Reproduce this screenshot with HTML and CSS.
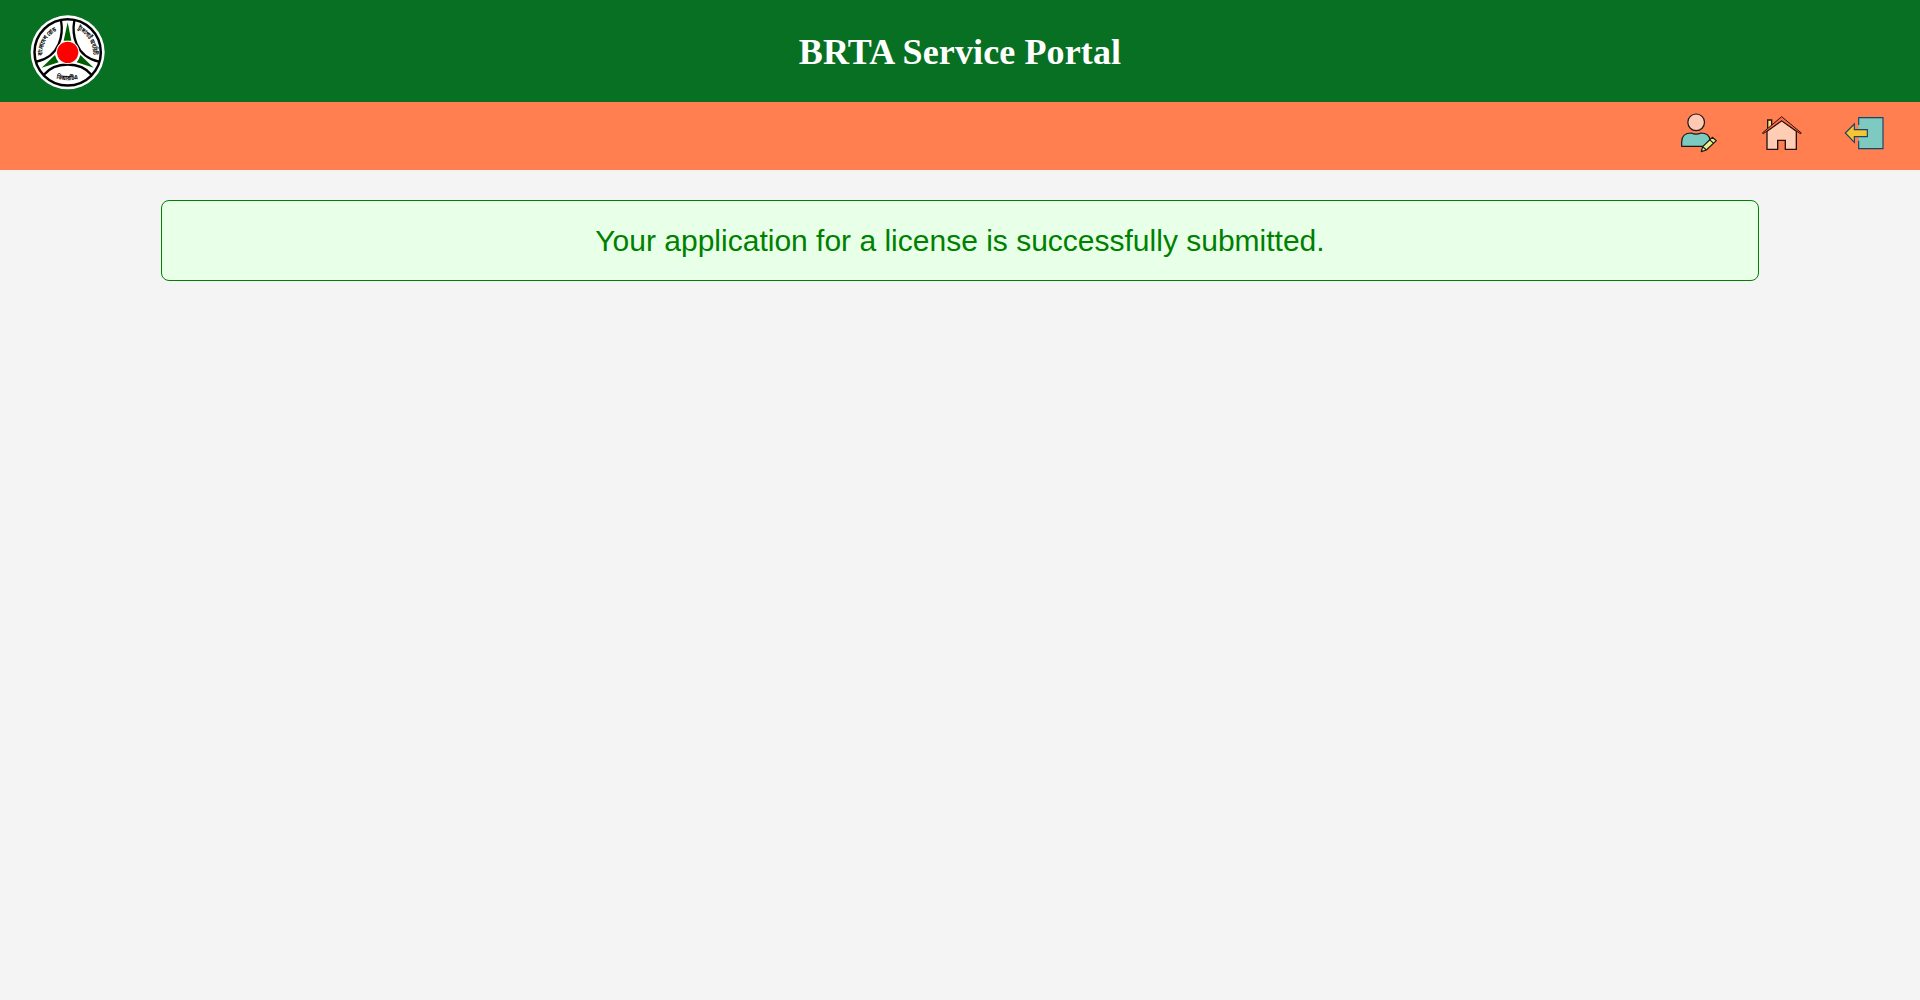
FILE: index.html
```html
<!DOCTYPE html>
<html lang="en">
<head>
<meta charset="utf-8">
<title>BRTA Service Portal</title>
<link rel="stylesheet" href="styles.css">
</head>
<body>
<header class="header">
  <svg class="logo" viewBox="30 30 225 225" role="img" aria-label="BRTA">
    <defs>
      <path id="arc-left" d="M67 152A82 82 0 0 1 112 76"/>
      <path id="arc-right" d="M172 73A82 82 0 0 1 219 153"/>
      <path id="arc-bottom" d="M109 221Q142 231 178 221"/>
    </defs>
    <circle cx="143" cy="142" r="111" fill="#fff"/>
    <circle cx="143" cy="142" r="99.500" fill="#fff" stroke="#000" stroke-width="7.500"/>
    <g fill="#005f00">
      <path d="M143 52L131 107H154Z"/>
      <path d="M65 188L105 150Q108 162 116 172Z"/>
      <path d="M221 188L181 150Q178 162 170 172Z"/>
    </g>
    <g fill="none" stroke="#000" stroke-width="7">
      <path d="M123 46C130 85 123 154 49 170"/>
      <path d="M163 46C156 85 163 154 237 170"/>
      <path d="M71 210C105 168 181 168 215 210"/>
    </g>
    <circle cx="143" cy="142" r="35" fill="#fff"/>
    <circle cx="143" cy="142" r="32" fill="#f00"/>
    <g class="logo-text">
      <text><textPath href="#arc-left" textLength="91" lengthAdjust="spacingAndGlyphs">বাংলাদেশ রোড</textPath></text>
      <text><textPath href="#arc-right" textLength="95" lengthAdjust="spacingAndGlyphs">ট্রান্সপোর্ট অথরিটি</textPath></text>
      <text><textPath href="#arc-bottom" textLength="66" lengthAdjust="spacingAndGlyphs">বিআরটিএ</textPath></text>
    </g>
  </svg>
  <h1 class="title">BRTA Service Portal</h1>
</header>
<nav class="nav">
  <a class="nav-link" aria-label="Edit profile">
    <svg class="icon" viewBox="24 39 120 120">
      <g stroke="#17191b" stroke-width="3.600" stroke-linejoin="round">
        <circle cx="78.500" cy="67" r="25" fill="#ffc9b3"/>
        <path d="M35 139V126C35 108 47 99 64 99Q78 106 93 99C108 99 118 107 120 119L101 139Z" fill="#7cc9c0"/>
        <path d="M94 155L98 140L127 112L139 122L109 150Z" fill="#e5f08a"/>
        <path d="M98 140L109 150M119 119L131 130" fill="none"/>
      </g>
    </svg>
  </a>
  <a class="nav-link" aria-label="Home">
    <svg class="icon" viewBox="33 39 120 120">
      <g stroke="#24140f" stroke-width="4">
        <path d="M53 86V60H65V75" fill="#ffe070"/>
        <path d="M51 94L95 62L139 94V148H106V121H83V148H51Z" fill="#ffccb4"/>
        <path d="M37 99L95 50L154 99L151 101L95 62L40 101Z" fill="#ff6842" stroke-width="3"/>
      </g>
    </svg>
  </a>
  <a class="nav-link" aria-label="Log out">
    <svg class="icon" viewBox="27 39 120 120">
      <path d="M71 53H144V146H71Z" fill="#7ec9c0"/>
      <path d="M71 75V53H144V146H71V122" fill="none" stroke="#17466b" stroke-width="3.500"/>
      <path d="M31 99L58 72V89H97V110H58V127Z" fill="#f6c52f" stroke="#17466b" stroke-width="3.500"/>
    </svg>
  </a>
</nav>
<main class="message">Your application for a license is successfully submitted.</main>
</body>
</html>
```
FILE: styles.css
```css
body {
  margin: 0;
  background: #f4f4f4;
  font-family: "Liberation Sans", Arial, sans-serif;
}

.header {
  display: grid;
  grid-template-columns: 75px 1fr 75px;
  align-items: center;
  box-sizing: border-box;
  height: 102px;
  padding: 2px 30px 0 30px;
  background: #087022;
}

.logo {
  display: block;
  width: 75px;
  height: 75px;
}

.logo-text {
  font: bold 20px "Noto Sans Bengali", "Noto Sans", sans-serif;
}

.title {
  margin: 0;
  color: #fff;
  font: bold 36px "Liberation Serif", "Times New Roman", serif;
  letter-spacing: 0.12px;
  text-align: center;
}

.nav {
  display: flex;
  justify-content: flex-end;
  gap: 43px;
  box-sizing: border-box;
  height: 68px;
  padding: 11px 36px 0 0;
  background: #ff7f50;
}

.icon {
  display: block;
  width: 40px;
  height: 40px;
  overflow: visible;
}

.message {
  box-sizing: border-box;
  width: 1598px;
  height: 81px;
  margin: 30px auto 0;
  border: 1px solid #008000;
  border-radius: 8px;
  background: #e8ffe8;
  color: #008000;
  font-size: 30px;
  line-height: 79px;
  text-align: center;
}
```
